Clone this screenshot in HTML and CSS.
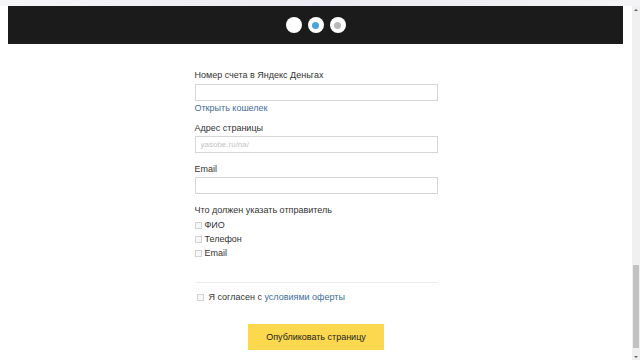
FILE: index.html
```html
<!DOCTYPE html>
<html lang="ru">
<head>
  <meta charset="UTF-8" />
  <meta name="viewport" content="width=device-width, initial-scale=1.0" />
  <title>Опубликовать страницу</title>
  <link rel="stylesheet" href="styles.css">
</head>
<body>
  <div class="topstrip"></div>
  <div class="window">
    <div class="page">
      <header class="steps">
        <span class="dot"></span>
        <span class="dot active"></span>
        <span class="dot next"></span>
      </header>

      <form class="form">
        <label class="label" for="wallet">Номер счета в Яндекс Деньгах</label>
        <input class="field" type="text" id="wallet" />
        <a class="link wallet-link" href="#">Открыть кошелек</a>

        <label class="label gap" for="address">Адрес страницы</label>
        <input class="field" type="text" id="address" placeholder="yasobe.ru/na/" />

        <label class="label gap wide" for="email">Email</label>
        <input class="field" type="text" id="email" />

        <div class="label gap wide">Что должен указать отправитель</div>
        <div class="options">
          <label class="option"><span class="box"></span>ФИО</label>
          <label class="option"><span class="box"></span>Телефон</label>
          <label class="option"><span class="box"></span>Email</label>
        </div>

        <hr class="divider" />

        <label class="agree"><span class="box"></span>Я согласен с&nbsp;<a class="link" href="#">условиями оферты</a></label>

        <div class="actions">
          <button type="button" class="publish">Опубликовать страницу</button>
        </div>
      </form>
    </div>

    <div class="scrollbar">
      <span class="arrow up"></span>
      <div class="track"><div class="thumb"></div></div>
      <span class="arrow down"></span>
    </div>
  </div>
</body>
</html>
```

FILE: styles.css
```css
:root {
  --text: #333;
  --link: #3f6d98;
  --border: #d6d6d6;
  --yellow: #fcd84e;
}

html, body {
  margin: 0;
  height: 100%;
  overflow: hidden;
}

body {
  font-family: 'Liberation Sans', Arial, sans-serif;
  font-size: 9px;
  color: var(--text);
  background: #fff;
}

.topstrip {
  height: 6px;
  background: linear-gradient(to right, #f6f5f8, #ecebf1 50%, #f4f4f6);
}

.window {
  display: flex;
  height: 354px;
}

.page {
  flex: 1;
}

.steps {
  margin: 0 9px 0 8px;
  height: 38px;
  background: #1b1b1b;
  display: flex;
  justify-content: center;
  align-items: center;
  gap: 6px;
}

.dot {
  width: 16px;
  height: 16px;
  border-radius: 50%;
  background: #fff;
  display: flex;
  align-items: center;
  justify-content: center;
}

.dot.active::after,
.dot.next::after {
  content: "";
  width: 7px;
  height: 7px;
  border-radius: 50%;
  background: #47a3d8;
}

.dot.next::after {
  background: #b9b9b9;
}

.form {
  width: 243px;
  margin: 26px auto 0;
  display: flex;
  flex-direction: column;
}

.label {
  display: block;
  line-height: 11px;
  margin-bottom: 3px;
}

.label.gap {
  margin-top: 9px;
  margin-bottom: 2px;
}

.label.gap.wide {
  margin-top: 11px;
}

.field {
  box-sizing: border-box;
  height: 17px;
  margin: 0;
  padding: 0 5px;
  border: 1px solid var(--border);
  border-radius: 0;
  font-family: inherit;
  font-size: 8px;
  outline: none;
}

.field::placeholder {
  color: #c4c4c4;
}

.link {
  color: var(--link);
  text-decoration: none;
}

.wallet-link {
  line-height: 11px;
  margin-top: 2px;
}

.options {
  display: flex;
  flex-direction: column;
}

.option,
.agree {
  display: flex;
  align-items: center;
  height: 14px;
}

.box {
  box-sizing: border-box;
  width: 7px;
  height: 7px;
  border: 1px solid #d3d3d3;
  background: #f7f7f7;
  margin-right: 3px;
}

.divider {
  border: none;
  border-top: 1px solid #ececec;
  margin: 22px 0 7px;
}

.agree {
  padding-left: 2px;
}

.agree .box {
  margin-right: 5px;
}

.actions {
  display: flex;
  justify-content: center;
  margin-top: 20px;
}

.publish {
  width: 136px;
  height: 26px;
  border: none;
  border-radius: 0;
  background: var(--yellow);
  color: #222;
  font-family: inherit;
  font-size: 9px;
  cursor: pointer;
}

.scrollbar {
  width: 8px;
  background: #f0f0f0;
  display: flex;
  flex-direction: column;
  align-items: center;
}

.track {
  flex: 1;
  width: 100%;
  display: flex;
  flex-direction: column;
  justify-content: flex-end;
}

.thumb {
  height: 83px;
  margin: 0 1px 8px;
  background: #c2c2c2;
}

.arrow {
  width: 0;
  height: 0;
  border-left: 2px solid transparent;
  border-right: 2px solid transparent;
}

.arrow.up {
  margin-top: 3px;
  border-bottom: 2px solid #606060;
}

.arrow.down {
  margin-bottom: 2px;
  border-top: 2px solid #606060;
}
```
